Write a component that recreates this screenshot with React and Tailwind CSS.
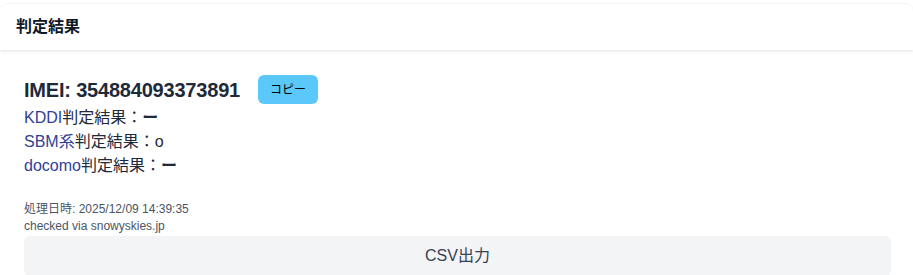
import React from 'react';

const App = () => {
    return (
        <div className="bg-white min-h-screen pt-[3px]" style={{ fontFamily: '"Liberation Sans", "Noto Sans CJK JP", sans-serif' }}>
            <div className="rounded-t-lg border-t border-gray-100 shadow-[0_2px_3px_rgba(0,0,0,0.08)] px-4 h-[47px] flex items-center">
                <h1 className="text-base font-bold text-gray-900">判定結果</h1>
            </div>

            <div className="pl-6 pr-[22px] pt-[25px]">
                <div className="flex items-center gap-[18px]">
                    <span className="text-xl font-bold text-gray-800 leading-7 tracking-[-0.2px]">IMEI: 354884093373891</span>
                    <button className="bg-[#5ac8fa] text-black text-xs rounded-md w-[60px] h-[29px]">コピー</button>
                </div>
                <div className="mt-[2px] text-base leading-6 text-gray-800">
                    <div><span className="text-[#2f3f99]">KDDI</span>判定結果：<b>ー</b></div>
                    <div><span className="text-[#2f3f99]">SBM系</span>判定結果：o</div>
                    <div><span className="text-[#2f3f99]">docomo</span>判定結果：<b>ー</b></div>
                </div>
                <div className="mt-[23px] text-xs leading-[17px] text-gray-600">
                    <div>処理日時: 2025/12/09 14:39:35</div>
                    <div>checked via snowyskies.jp</div>
                </div>
                <button className="mt-[1px] w-full h-10 bg-gray-100 rounded-md text-base text-gray-700">CSV出力</button>
            </div>
        </div>
    );
};

export default App;
